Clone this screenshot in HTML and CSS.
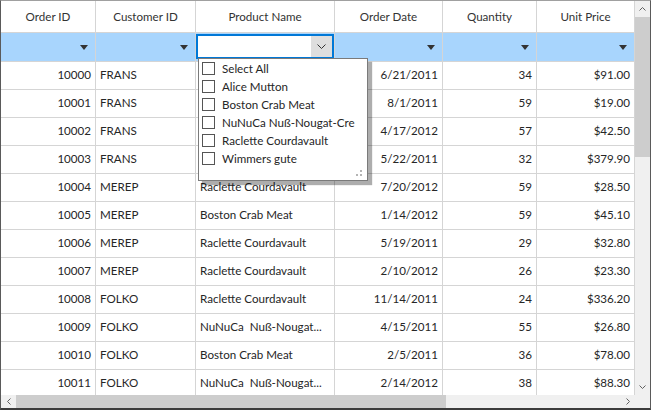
FILE: index.html
```html
<!DOCTYPE html>
<html>
<head>
<meta charset="utf-8">
<title>Grid Filter Row</title>
<link rel="stylesheet" href="styles.css">
</head>
<body>
<div class="frame">
  <div class="main">
    <div class="table">
      <div class="hd">Order ID</div>
      <div class="hd">Customer ID</div>
      <div class="hd">Product Name</div>
      <div class="hd">Order Date</div>
      <div class="hd">Quantity</div>
      <div class="hd">Unit Price</div>

      <div class="fc"><span class="tri"></span></div>
      <div class="fc"><span class="tri"></span></div>
      <div class="fc fc-combo">
        <div class="combo">
          <span class="combo-btn"><svg width="9" height="5" viewBox="0 0 9 5"><polyline points="0.5,0.5 4.5,4.5 8.5,0.5" fill="none" stroke="#333" stroke-width="1"/></svg></span>
        </div>
      </div>
      <div class="fc"><span class="tri"></span></div>
      <div class="fc"><span class="tri"></span></div>
      <div class="fc"><span class="tri"></span></div>

      <div class="c r">10000</div><div class="c">FRANS</div><div class="c"></div><div class="c r">6/21/2011</div><div class="c r">34</div><div class="c r">$91.00</div>
      <div class="c r">10001</div><div class="c">FRANS</div><div class="c"></div><div class="c r">8/1/2011</div><div class="c r">59</div><div class="c r">$19.00</div>
      <div class="c r">10002</div><div class="c">FRANS</div><div class="c"></div><div class="c r">4/17/2012</div><div class="c r">57</div><div class="c r">$42.50</div>
      <div class="c r">10003</div><div class="c">FRANS</div><div class="c"></div><div class="c r">5/22/2011</div><div class="c r">32</div><div class="c r">$379.90</div>
      <div class="c r">10004</div><div class="c">MEREP</div><div class="c">Raclette Courdavault</div><div class="c r">7/20/2012</div><div class="c r">59</div><div class="c r">$28.50</div>
      <div class="c r">10005</div><div class="c">MEREP</div><div class="c">Boston Crab Meat</div><div class="c r">1/14/2012</div><div class="c r">59</div><div class="c r">$45.10</div>
      <div class="c r">10006</div><div class="c">MEREP</div><div class="c">Raclette Courdavault</div><div class="c r">5/19/2011</div><div class="c r">29</div><div class="c r">$32.80</div>
      <div class="c r">10007</div><div class="c">MEREP</div><div class="c">Raclette Courdavault</div><div class="c r">2/10/2012</div><div class="c r">26</div><div class="c r">$23.30</div>
      <div class="c r">10008</div><div class="c">FOLKO</div><div class="c">Raclette Courdavault</div><div class="c r">11/14/2011</div><div class="c r">24</div><div class="c r">$336.20</div>
      <div class="c r">10009</div><div class="c">FOLKO</div><div class="c">NuNuCa  Nuß-Nougat...</div><div class="c r">4/15/2011</div><div class="c r">55</div><div class="c r">$26.80</div>
      <div class="c r">10010</div><div class="c">FOLKO</div><div class="c">Boston Crab Meat</div><div class="c r">2/5/2011</div><div class="c r">36</div><div class="c r">$78.00</div>
      <div class="c r">10011</div><div class="c">FOLKO</div><div class="c">NuNuCa  Nuß-Nougat...</div><div class="c r">2/14/2012</div><div class="c r">38</div><div class="c r">$88.30</div>
    </div>
    <div class="vscroll">
      <div class="sb-btn"><svg width="7" height="4" viewBox="0 0 7 4"><polyline points="0.5,3.5 3.5,0.5 6.5,3.5" fill="none" stroke="#606060" stroke-width="1"/></svg></div>
      <div class="vthumb"></div>
      <div class="vtrack"></div>
      <div class="sb-btn"><svg width="7" height="4" viewBox="0 0 7 4"><polyline points="0.5,0.5 3.5,3.5 6.5,0.5" fill="none" stroke="#606060" stroke-width="1"/></svg></div>
    </div>
  </div>
  <div class="hscroll">
    <div class="hb-btn"><svg width="4" height="7" viewBox="0 0 4 7"><polyline points="3.5,0.5 0.5,3.5 3.5,6.5" fill="none" stroke="#606060" stroke-width="1"/></svg></div>
    <div class="hthumb"></div>
    <div class="htrack"></div>
    <div class="hb-btn"><svg width="4" height="7" viewBox="0 0 4 7"><polyline points="0.5,0.5 3.5,3.5 0.5,6.5" fill="none" stroke="#606060" stroke-width="1"/></svg></div>
    <div class="corner"></div>
  </div>

  <div class="popup">
    <div class="list">
      <div class="item"><span class="cb"></span>Select All</div>
      <div class="item"><span class="cb"></span>Alice Mutton</div>
      <div class="item"><span class="cb"></span>Boston Crab Meat</div>
      <div class="item"><span class="cb"></span>NuNuCa Nuß-Nougat-Cre</div>
      <div class="item"><span class="cb"></span>Raclette Courdavault</div>
      <div class="item"><span class="cb"></span>Wimmers gute</div>
    </div>
    <svg class="grip" width="8" height="7" viewBox="0 0 8 7">
      <rect x="5" y="0" width="2" height="2" fill="#b4b4b4"/>
      <rect x="1" y="4" width="2" height="2" fill="#b4b4b4"/>
      <rect x="5" y="4" width="2" height="2" fill="#b4b4b4"/>
    </svg>
  </div>
</div>
</body>
</html>
```

FILE: styles.css
```css
body {
  margin: 0;
  font-family: "Segoe UI", Lato, "Noto Sans", sans-serif;
  font-size: 11.6px;
  color: #222;
  background: #fff;
}

.frame {
  position: relative;
  width: 651px;
  height: 410px;
  box-sizing: border-box;
  border-top: 1px solid #a0a0a0;
  border-left: 1px solid #5a5a5a;
  border-right: 1px solid #5a5a5a;
  border-bottom: 2px solid #3c3c3c;
  background: #fff;
  overflow: hidden;
  display: flex;
  flex-direction: column;
}

.main {
  display: flex;
  height: 394px;
  flex: none;
}

.table {
  width: 634px;
  flex: none;
  display: grid;
  grid-template-columns: 95px 100px 139px 108px 94px 98px;
  grid-template-rows: 32px 29px;
  grid-auto-rows: 28px;
  align-content: start;
  overflow: hidden;
}

.table > div {
  box-sizing: border-box;
  border-right: 1px solid #d5d5d5;
  border-bottom: 1px solid #d5d5d5;
  min-width: 0;
}

.hd {
  display: flex;
  align-items: center;
  justify-content: center;
  padding-bottom: 1px;
  color: #333;
}

.fc {
  background: #a8d5fd;
  display: flex;
  align-items: center;
  justify-content: flex-end;
  padding-right: 7px;
}

.tri {
  width: 0;
  height: 0;
  border-left: 4px solid transparent;
  border-right: 4px solid transparent;
  border-top: 5px solid #333;
}

.fc-combo {
  display: block;
  padding: 1px 0 2px 0;
}

.combo {
  height: 25px;
  box-sizing: border-box;
  border: 2px solid #0078d7;
  background: #fff;
  display: flex;
  justify-content: flex-end;
}

.combo-btn {
  width: 21px;
  background: #dedede;
  display: flex;
  align-items: center;
  justify-content: center;
}

.c {
  line-height: 25px;
  padding: 0 4px 2px;
  white-space: pre;
  overflow: hidden;
  text-overflow: ellipsis;
  color: #262626;
}

.r {
  text-align: right;
}

.vscroll {
  width: 15px;
  flex: none;
  display: flex;
  flex-direction: column;
  background: #f0f0f0;
}

.sb-btn {
  height: 16px;
  flex: none;
  display: flex;
  align-items: center;
  justify-content: center;
}

.vthumb {
  height: 140px;
  flex: none;
  background: #cdcdcd;
}

.vtrack {
  flex: 1;
}

.hscroll {
  height: 13px;
  flex: none;
  display: flex;
  background: #f0f0f0;
}

.hb-btn {
  width: 15px;
  flex: none;
  display: flex;
  align-items: center;
  justify-content: center;
}

.hthumb {
  width: 430px;
  flex: none;
  background: #cdcdcd;
}

.htrack {
  flex: 1;
}

.corner {
  width: 15px;
  flex: none;
  background: #f0f0f0;
}

.popup {
  position: absolute;
  left: 197px;
  top: 57px;
  width: 170px;
  height: 123px;
  box-sizing: border-box;
  border: 1px solid #7a7a7a;
  background: #fff;
  box-shadow: 4px 4px 1px rgba(0, 0, 0, 0.32);
  padding: 0 4px 3px 3px;
  display: flex;
  flex-direction: column;
}

.list {
  width: 159px;
  overflow: hidden;
}

.item {
  height: 18px;
  display: flex;
  align-items: center;
  white-space: nowrap;
  color: #262626;
}

.cb {
  width: 13px;
  height: 13px;
  box-sizing: border-box;
  border: 1px solid #555;
  margin: 1px 7px 0 0;
  flex: none;
}

.grip {
  margin-top: auto;
  align-self: flex-end;
}
```
